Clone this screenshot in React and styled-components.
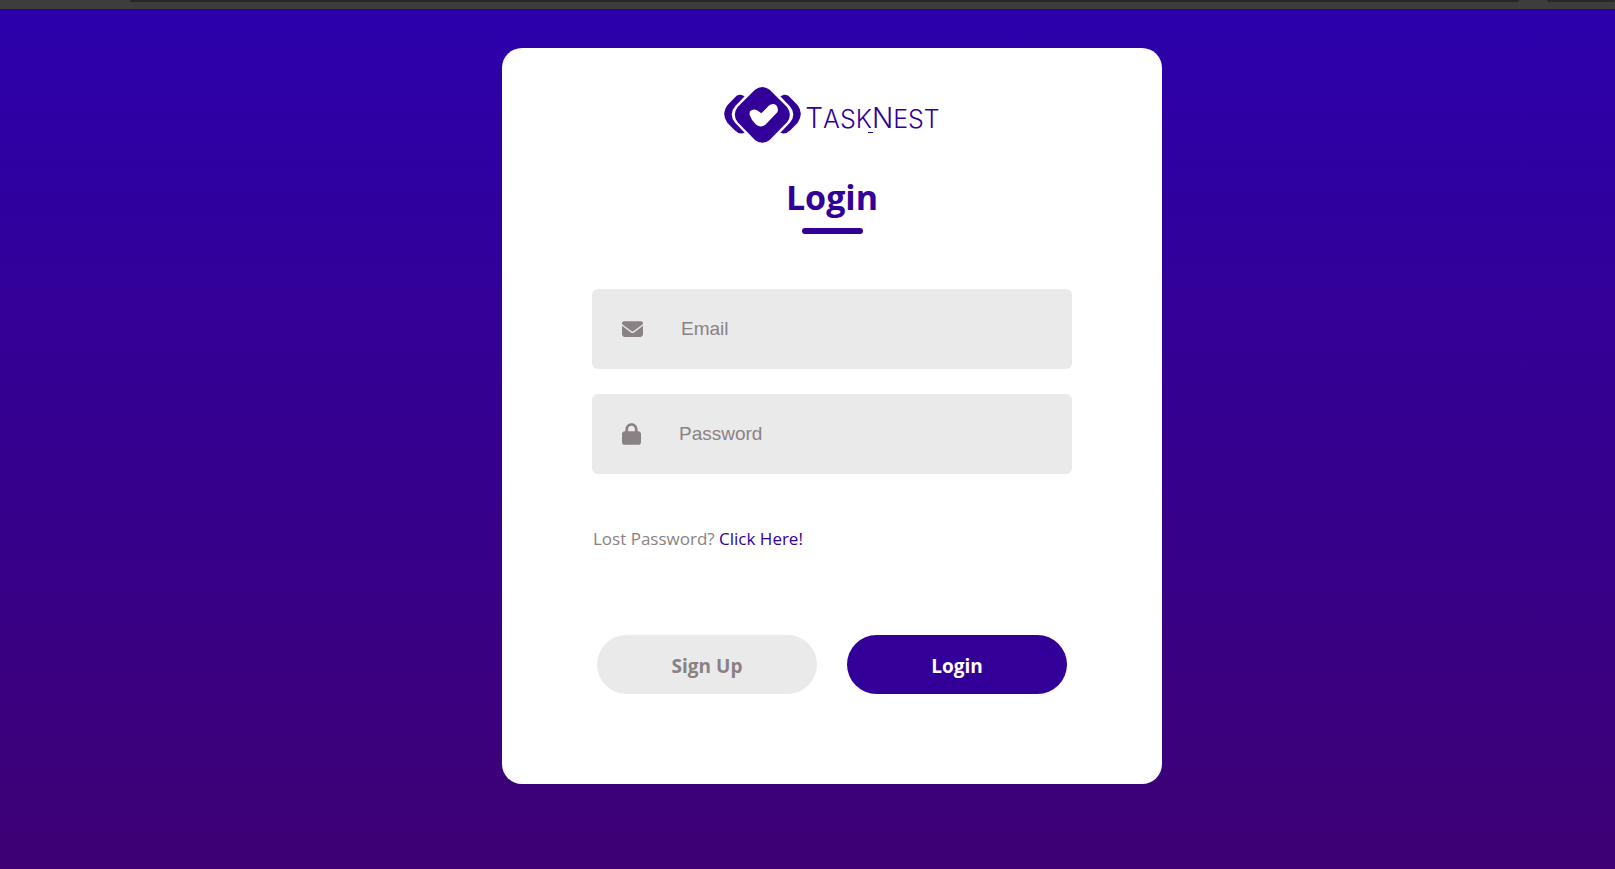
import React from "react";
import styled, { createGlobalStyle } from "styled-components";

const PRIMARY = "#320099";
const MUTED = "#8a8184";
const FIELD = "#eaeaea";

const GlobalStyle = createGlobalStyle`
  *, *::before, *::after { box-sizing: border-box; }
  body { margin: 0; font-family: "Open Sans", "Noto Sans", sans-serif; }
`;

const Page = styled.div`
  min-height: 100vh;
  display: flex;
  flex-direction: column;
  background: linear-gradient(#2c00ac, #3e0074);
`;

const BrowserEdge = styled.div`
  height: 9px;
  padding-left: 130px;
  display: flex;
  gap: 28px;
  background: #3d3d3d;
`;

const AddressBar = styled.div`
  flex: 1;
  height: 2px;
  background: #272727;
  border-radius: 0 0 3px 3px;
`;

const Toolbox = styled(AddressBar)`
  flex: 0 0 68px;
`;

const Stage = styled.main`
  flex: 1;
  display: flex;
  justify-content: center;
  align-items: flex-start;
  padding: 39px 0 39px 49px;
`;

const Card = styled.form`
  width: 660px;
  max-width: 100%;
  padding: 38px 90px 90px;
  display: flex;
  flex-direction: column;
  background: #fff;
  border-radius: 20px;
`;

const Brand = styled.div`
  display: flex;
  justify-content: center;
  align-items: center;
  gap: 4px;
  height: 58px;
  color: ${PRIMARY};
`;

const Wordmark = styled.span`
  position: relative;
  font-family: Inter, sans-serif;
  font-weight: 300;
  font-size: 25px;
  line-height: 28px;
  padding-top: 6px;

  /* small tick under the join of the two words */
  &::after {
    content: "";
    position: absolute;
    left: 47%;
    bottom: 0;
    width: 5px;
    height: 1px;
    background: currentColor;
  }
`;

const Initial = styled.span`
  font-size: 28px;
`;

const Header = styled.header`
  margin-top: 29px;
  display: flex;
  flex-direction: column;
  align-items: center;
  gap: 7px;
`;

const Title = styled.h1`
  margin: 0;
  font-size: 34px;
  line-height: 48px;
  font-weight: 700;
  color: ${PRIMARY};
`;

const Underline = styled.div`
  width: 61px;
  height: 6px;
  border-radius: 3px;
  background: ${PRIMARY};
`;

const Fields = styled.div`
  margin-top: 55px;
  display: flex;
  flex-direction: column;
  gap: 25px;
`;

const Field = styled.label`
  display: flex;
  align-items: center;
  gap: 38px;
  height: 80px;
  padding: 0 30px;
  border-radius: 6px;
  background: ${FIELD};
  color: ${MUTED};
`;

const Input = styled.input`
  flex: 1;
  min-width: 0;
  height: 50px;
  padding: 0;
  border: 0;
  outline: 0;
  background: transparent;
  font-family: "Liberation Sans", sans-serif;
  font-size: 19px;
  color: ${MUTED};
  &::placeholder { color: ${MUTED}; opacity: 1; }
`;

const Lost = styled.p`
  margin: 51px 0 0 1px;
  font-size: 17px;
  line-height: 28px;
  color: ${MUTED};
`;

const LostLink = styled.a`
  color: ${PRIMARY};
  text-decoration: none;
`;

const Actions = styled.div`
  margin-top: 82px;
  display: flex;
  justify-content: center;
  gap: 30px;
`;

const Button = styled.button`
  width: 220px;
  height: 59px;
  padding: 3px 0 0;
  border: 0;
  border-radius: 30px;
  font-family: inherit;
  font-size: 19px;
  font-weight: 700;
  cursor: pointer;
  color: ${(p) => (p.$primary ? "#fff" : MUTED)};
  background: ${(p) => (p.$primary ? PRIMARY : FIELD)};
`;

const LogoMark = () => (
  <svg width="77" height="56" viewBox="0 0 231 168" aria-hidden="true">
    <g fill="currentColor">
      <path d="M62 28C50 20 42 22 34 30L10 55Q-9 80 10 107L32 130Q46 144 62 137L34 108Q12 82 34 57Z" />
      <path d="M169 28C181 20 189 22 197 30L221 55Q240 80 221 107L199 130Q185 144 169 137L197 108Q219 82 197 57Z" />
      <path d="M93 8Q115-8 137 8L189 60Q206 83 189 106L137 159Q115 176 93 159L41 106Q24 83 41 60Z" />
    </g>
    <path d="M78 73Q87 64 98 69L112 79L134 56Q146 47 156 54Q165 63 160 76L124 113Q108 124 95 112Q82 99 77 84Q76 78 78 73Z" fill="#fff" />
  </svg>
);

const MailIcon = () => (
  <svg width="21" height="16" viewBox="0 0 512 384" fill="currentColor" aria-hidden="true">
    <path d="M48 0C21.500 0 0 21.500 0 48c0 15.100 7.100 29.300 19.200 38.400L236.800 249.600c11.400 8.500 27 8.500 38.400 0L492.800 86.400C504.900 77.300 512 63.100 512 48c0-26.500-21.500-48-48-48zM0 112V320c0 35.300 28.700 64 64 64H448c35.300 0 64-28.700 64-64V112L294.400 275.200c-22.800 17.100-54 17.100-76.800 0z" />
  </svg>
);

const LockIcon = () => (
  <svg width="19" height="22" viewBox="0 0 448 512" fill="currentColor" aria-hidden="true">
    <path d="M144 144v48H304V144c0-44.200-35.800-80-80-80s-80 35.800-80 80zM80 192V144C80 64.500 144.500 0 224 0s144 64.500 144 144v48h16c35.300 0 64 28.700 64 64V448c0 35.300-28.700 64-64 64H64c-35.300 0-64-28.700-64-64V256c0-35.300 28.700-64 64-64z" />
  </svg>
);

export default function App() {
  return (
    <Page>
      <GlobalStyle />
      <BrowserEdge>
        <AddressBar />
        <Toolbox />
      </BrowserEdge>
      <Stage>
        <Card onSubmit={(e) => e.preventDefault()}>
          <Brand>
            <LogoMark />
            <Wordmark>
              <Initial>T</Initial>ASK<Initial>N</Initial>EST
            </Wordmark>
          </Brand>
          <Header>
            <Title>Login</Title>
            <Underline />
          </Header>
          <Fields>
            <Field>
              <MailIcon />
              <Input type="email" placeholder="Email" aria-label="Email" />
            </Field>
            <Field>
              <LockIcon />
              <Input type="password" placeholder="Password" aria-label="Password" />
            </Field>
          </Fields>
          <Lost>
            Lost Password? <LostLink href="#reset">Click Here!</LostLink>
          </Lost>
          <Actions>
            <Button type="button">Sign Up</Button>
            <Button type="submit" $primary>Login</Button>
          </Actions>
        </Card>
      </Stage>
    </Page>
  );
}
